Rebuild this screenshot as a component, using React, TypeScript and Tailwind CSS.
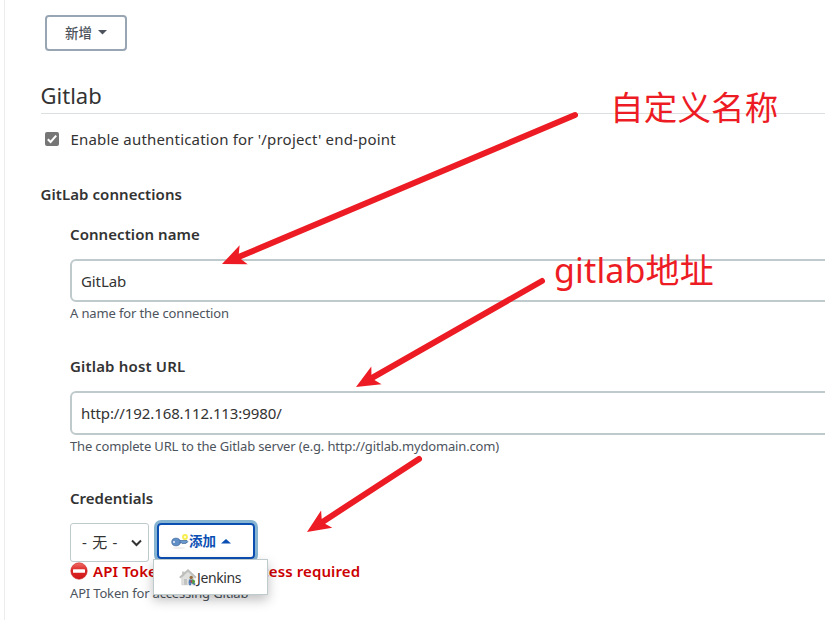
import React from "react";

const Arrow = ({ x1, y1, x2, y2 }: { x1: number; y1: number; x2: number; y2: number }) => {
  const len = Math.hypot(x2 - x1, y2 - y1);
  const angle = (Math.atan2(y2 - y1, x2 - x1) * 180) / Math.PI;
  return (
    <g transform={`translate(${x2} ${y2}) rotate(${angle})`}>
      <line x1={-len} y1={0} x2={-18} y2={0} stroke="#ed1c24" strokeWidth={6} strokeLinecap="round" />
      <path d="M0 0 L-23.5 -10.3 L-19.5 -3 L-19.5 3 L-23.5 10.3 Z" fill="#ed1c24" />
    </g>
  );
};

const KeyIcon = () => (
  <svg width="18" height="16" viewBox="0 0 18 16" className="shrink-0">
    <ellipse cx="8" cy="14" rx="6" ry="1" fill="#eeeeee" />
    <circle cx="14" cy="3" r="2.9" fill="#f7ed4a" />
    <circle cx="14" cy="3" r="1.2" fill="#fffcd0" />
    <path d="M8 6.5h8l.8 1.1-1 1.3h-1l-.7 1.1-1-1.1-1.2 1-1-1H8z" fill="#6d9bd0" stroke="#3c628f" strokeWidth=".7" />
    <ellipse cx="5" cy="8" rx="4.2" ry="3.8" fill="#5f8fc6" stroke="#416b9d" strokeWidth=".8" />
    <circle cx="3" cy="8" r="1.1" fill="#e7edf5" />
  </svg>
);

const HouseIcon = () => (
  <svg width="18" height="17" viewBox="0 0 18 17" className="shrink-0">
    <path d="M2.8 8.4 9 3l6 5.4v7.4H2.8z" fill="#e0e1de" stroke="#c5c6c3" strokeWidth=".6" />
    <path d="M3 2.5h2.5V6L3 8z" fill="#c8c9c6" />
    <path d="M.8 8.8 9 1.4l8 7.4" fill="none" stroke="#bcbebb" strokeWidth="1.9" />
    <path d="M5 10h3v5.8H5z" fill="#c2c4c2" />
    <circle cx="12.2" cy="8.5" r="1.7" fill="#997043" />
    <path d="M10 10.5h3l1 4h-4.5z" fill="#4776b5" />
    <path d="M13 10l3.2 1.7-.8 3.3h-2z" fill="#4e9a3c" />
    <path d="M11.6 10.5l1.8 2-1.4 1.5z" fill="#d6362d" />
    <path d="M10 14.3h2v2h-2zM14.5 14.3h1.8v2h-1.8z" fill="#4a75b5" />
  </svg>
);

const StopIcon = () => (
  <svg width="18" height="18" viewBox="0 0 18 18" className="shrink-0">
    <defs>
      <linearGradient id="stop" x1="0" y1="0" x2="0" y2="1">
        <stop offset="0" stopColor="#f0706a" />
        <stop offset=".45" stopColor="#dc2626" />
        <stop offset="1" stopColor="#d01818" />
      </linearGradient>
    </defs>
    <circle cx="9" cy="9" r="8.2" fill="url(#stop)" stroke="#c92020" strokeWidth=".6" />
    <rect x="3" y="7.2" width="12" height="3.6" rx=".6" fill="#fff" />
  </svg>
);

export default function App() {
  return (
    <div className="relative h-[620px] w-[825px] overflow-hidden bg-white pl-1 font-['Noto_Sans','Noto_Sans_CJK_SC',sans-serif] text-[#333] whitespace-nowrap">
      <main className="flex h-full flex-col border-l border-[#ececec] pl-9">
        <button className="mt-[15px] ml-1 flex h-9 w-[82px] shrink-0 items-center rounded-[4px] border-2 border-[#98a6b3] pt-px pl-[18px] text-[13.5px] font-medium text-[#4d545d]">
          <span>新增</span>
          <svg width="9" height="5" viewBox="0 0 9 5" className="mb-[3px] ml-1.5"><path d="M0 0h9L4.5 4.5z" fill="#4d545d" /></svg>
        </button>
        <h2 className="mt-7 flex h-[35px] shrink-0 border-b border-[#dcdfdf] text-[22px] leading-[32px]"><span className="-ml-[0.5px]">Gitlab</span></h2>
        <label className="mt-[13px] flex h-6 shrink-0 items-center pl-1 text-[15px]">
          <span className="flex h-[14px] w-[14px] items-center justify-center rounded-[2px] bg-[#767676]">
            <svg width="12" height="12" viewBox="0 0 12 12"><path d="M1.8 6.2 4.6 9 10.2 2.6" stroke="#fff" strokeWidth="2" fill="none" /></svg>
          </span>
          <span className="ml-[11.5px] tracking-[0.19px]">Enable authentication for '/project' end-point</span>
        </label>
        <h3 className="mt-[31px] flex h-6 shrink-0 items-center text-[15px] font-semibold"><span className="-ml-[0.5px] tracking-[0.07px]">GitLab connections</span></h3>
        <section className="flex flex-col pl-[29px]">
          <label className="mt-4 flex h-6 items-center text-[15px] font-semibold"><span className="tracking-[0.07px]">Connection name</span></label>
          <div className="mt-[13px] -mr-2 flex h-[43px] items-center rounded-[6px] border-2 border-[#bfcacd] pt-0.5 pl-[9px] text-[15px]"><span className="tracking-[-0.1px]">GitLab</span></div>
          <p className="mt-0.5 flex h-5 items-center text-[13px] text-[#4d545d]"><span className="tracking-[-0.13px]">A name for the connection</span></p>
          <label className="mt-[30px] flex h-6 items-center text-[15px] font-semibold"><span className="tracking-[0.17px]">Gitlab host URL</span></label>
          <div className="mt-[13px] -mr-2 flex h-[44px] items-center rounded-[6px] border-2 border-[#bfcacd] pl-[9px] text-[15px]"><span className="tracking-[-0.1px]">http://192.168.112.113:9980/</span></div>
          <p className="mt-0.5 flex h-5 items-center text-[13px] text-[#4d545d]"><span className="tracking-[-0.155px]">The complete URL to the Gitlab server (e.g. http://gitlab.mydomain.com)</span></p>
          <label className="mt-[29px] flex h-6 items-center text-[15px] font-semibold"><span>Credentials</span></label>
          <div className="mt-[13px] flex h-[39px] items-start">
            <div className="flex h-[39px] w-[79px] items-center rounded-[3px] border border-[#bfcacd] pl-[11px] text-[15px]">
              <span className="tracking-[0.7px]">- 无 -</span>
              <svg width="11" height="8" viewBox="0 0 11 8" className="ml-auto mr-[6px]"><path d="M1 1.5 5.5 6 10 1.5" stroke="#333" strokeWidth="2" fill="none" /></svg>
            </div>
            <div className="relative ml-2">
              <button className="flex h-9 w-[98px] items-center rounded-[4px] border-2 border-[#0b4fb3] pt-px pl-[12px] text-[13.5px] font-bold text-[#0b4fb3] shadow-[0_0_0_3px_#86b4d1]">
                <KeyIcon />
                <span>添加</span>
                <svg width="10" height="5" viewBox="0 0 10 5" className="ml-[5px]"><path d="M0 4.5h10L5 0z" fill="#0b4fb3" /></svg>
              </button>
              <div className="absolute top-9 -left-1 z-10 flex h-9 w-[115px] items-center border border-[#bfcacd] bg-white pl-[25px] text-[14px] shadow-[0_5px_12px_rgba(0,0,0,0.25)]">
                <HouseIcon />
                <span className="pt-px tracking-[-0.4px]">Jenkins</span>
              </div>
            </div>
          </div>
          <p className="-mt-px flex h-5 items-center gap-[5px] text-[15px] font-semibold text-[#c00]"><StopIcon /><span className="tracking-[0.11px]">API Token for Gitlab access required</span></p>
          <p className="mt-[3px] flex h-5 items-center text-[13px] text-[#4d545d]"><span className="tracking-[-0.17px]">API Token for accessing Gitlab</span></p>
        </section>
      </main>
      <svg className="pointer-events-none absolute inset-0 z-20" width="825" height="620">
        <Arrow x1={575} y1={115} x2={222} y2={264} />
        <Arrow x1={542} y1={281} x2={356} y2={387} />
        <Arrow x1={419} y1={459} x2={307} y2={532} />
      </svg>
      <div className="absolute top-[82px] left-[610px] z-20 text-[33.5px] leading-[50px] tracking-[0.2px] text-[#ed1c24]">自定义名称</div>
      <div className="absolute top-[245px] left-[554px] z-20 text-[34px] leading-[50px] tracking-[0.15px] text-[#ed1c24]">gitlab地址</div>
    </div>
  );
}
